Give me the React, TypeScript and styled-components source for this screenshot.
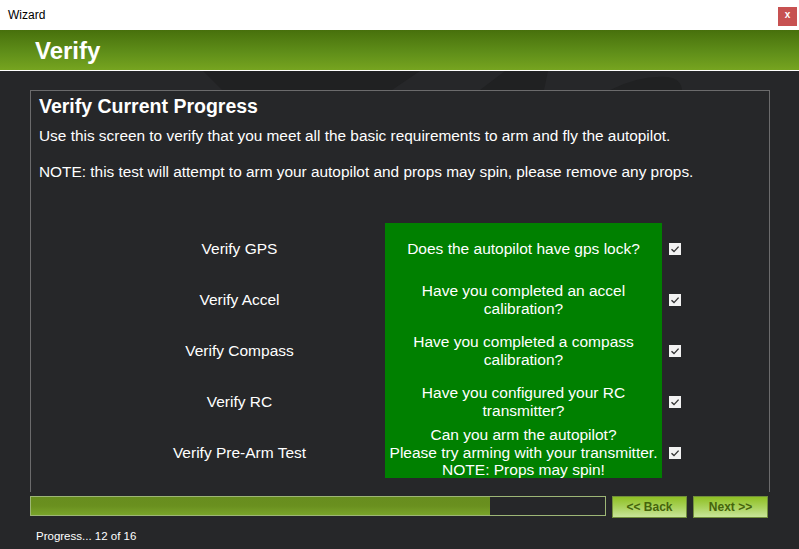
import { Fragment } from "react";
import styled, { createGlobalStyle } from "styled-components";

const GlobalStyle = createGlobalStyle`
  html, body {
    margin: 0;
    padding: 0;
    overflow: hidden;
  }
  body {
    font-family: "Liberation Sans", Arial, sans-serif;
  }
`;

const Window = styled.div`
  width: 799px;
  height: 549px;
  display: flex;
  flex-direction: column;
  background: #262729;
`;

const TitleBar = styled.div`
  height: 30px;
  flex: none;
  background: #ffffff;
  display: flex;
  align-items: center;
  justify-content: space-between;
  padding: 0 2px 0 8px;
  box-sizing: border-box;
  font-size: 12px;
  color: #000;
`;

const CloseButton = styled.div`
  width: 19px;
  height: 19px;
  margin-top: 2px;
  background: #c75151;
  color: #fff;
  font-size: 10px;
  font-weight: bold;
  display: flex;
  align-items: center;
  justify-content: center;
  line-height: 1;
  padding-bottom: 2px;
  box-sizing: border-box;
`;

const Header = styled.div`
  height: 41px;
  flex: none;
  box-sizing: border-box;
  background: linear-gradient(to bottom, #47700c 0%, #5f8e19 55%, #76a420 100%);
  border-bottom: 1px solid #ffffff;
  display: flex;
  align-items: center;
  padding-left: 35px;
  padding-top: 1px;
`;

const HeaderTitle = styled.h1`
  margin: 0;
  font-size: 24px;
  font-weight: bold;
  color: #ffffff;
`;

const Body = styled.div`
  flex: 1;
  position: relative;
  padding: 19px 30px 0 30px;
  box-sizing: border-box;
`;

const Watermark = styled.svg`
  position: absolute;
  left: 0;
  top: 0;
  width: 799px;
  height: 40px;
  fill: #202122;
`;

const Panel = styled.div`
  position: relative;
  width: 740px;
  height: 402px;
  box-sizing: border-box;
  border: 1px solid #6b6b6c;
  border-bottom: none;
  background: #262729;
  padding: 3px 8px 0 8px;
  color: #ffffff;
`;

const PanelTitle = styled.h2`
  margin: 0;
  font-size: 19.5px;
  line-height: 24px;
  font-weight: bold;
`;

const Para = styled.p<{ $gap: number }>`
  margin: ${(p) => p.$gap}px 0 0 0;
  font-size: 15.4px;
  line-height: 20px;
`;

const Checklist = styled.div`
  display: grid;
  grid-template-columns: 291px 277px 1fr;
  grid-auto-rows: 51px;
  margin: 41px 0 0 55px;
  height: 256px;
  overflow: hidden;
`;

const Label = styled.div`
  display: flex;
  align-items: center;
  justify-content: center;
  font-size: 15.5px;
`;

const Question = styled.div`
  background: #008000;
  display: flex;
  align-items: center;
  justify-content: center;
  text-align: center;
  font-size: 15.5px;
  line-height: 17.5px;
  white-space: pre-line;
`;

const CheckCell = styled.div`
  display: flex;
  align-items: center;
  padding-left: 7px;
`;

const Footer = styled.div`
  display: flex;
  align-items: flex-start;
  gap: 6px;
  margin-top: 4px;
`;

const Track = styled.div`
  width: 576px;
  height: 20px;
  box-sizing: border-box;
  border: 1px solid #9db676;
  background: #262729;
`;

const Fill = styled.div`
  height: 100%;
  background: linear-gradient(to bottom, #678d1e 0%, #6a901f 50%, #79a42a 100%);
`;

const WizardButton = styled.button`
  width: 75px;
  height: 22px;
  box-sizing: border-box;
  border: 1px solid #718f3b;
  background: linear-gradient(to bottom, #8fc024 0%, #a9d25a 50%, #c9e59a 100%);
  color: #45640c;
  font-family: "Liberation Sans", Arial, sans-serif;
  font-size: 12px;
  font-weight: bold;
  padding: 0;
  cursor: pointer;
`;

const Status = styled.div`
  margin: 11px 0 0 6px;
  font-size: 11.5px;
  line-height: 14px;
  color: #ffffff;
`;

function CheckBox() {
  return (
    <svg width="12" height="12" viewBox="0 0 12 12">
      <rect x="0" y="0" width="12" height="12" fill="#f2f2f2" />
      <path d="M2.5 6.2 L5 8.6 L9.6 3.6" fill="none" stroke="#333" strokeWidth="1.4" />
    </svg>
  );
}

const items = [
  { label: "Verify GPS", question: "Does the autopilot have gps lock?" },
  { label: "Verify Accel", question: "Have you completed an accel\ncalibration?" },
  { label: "Verify Compass", question: "Have you completed a compass\ncalibration?" },
  { label: "Verify RC", question: "Have you configured your RC\ntransmitter?" },
  {
    label: "Verify Pre-Arm Test",
    question: "Can you arm the autopilot?\nPlease try arming with your transmitter.\nNOTE: Props may spin!",
  },
];

const step = 12;
const total = 16;

export default function App() {
  return (
    <Window>
      <GlobalStyle />
      <TitleBar>
        <span>Wizard</span>
        <CloseButton>x</CloseButton>
      </TitleBar>
      <Header>
        <HeaderTitle>Verify</HeaderTitle>
      </Header>
      <Body>
        <Watermark viewBox="0 0 799 40">
          <polygon points="203,0 420,0 392,19 222,19" />
          <polygon points="480,19 505,0 548,0 544,19" />
          <path d="M610 19 Q640 4 668 6 Q681 8 682 19 Z" />
        </Watermark>
        <Panel>
          <PanelTitle>Verify Current Progress</PanelTitle>
          <Para $gap={8}>
            Use this screen to verify that you meet all the basic requirements to arm and fly the autopilot.
          </Para>
          <Para $gap={16}>
            NOTE: this test will attempt to arm your autopilot and props may spin, please remove any props.
          </Para>
          <Checklist>
            {items.map((item) => (
              <Fragment key={item.label}>
                <Label>{item.label}</Label>
                <Question>{item.question}</Question>
                <CheckCell>
                  <CheckBox />
                </CheckCell>
              </Fragment>
            ))}
          </Checklist>
        </Panel>
        <Footer>
          <Track>
            <Fill style={{ width: `${(step / (total - 1)) * 100}%` }} />
          </Track>
          <WizardButton>&lt;&lt; Back</WizardButton>
          <WizardButton>Next &gt;&gt;</WizardButton>
        </Footer>
        <Status>
          Progress... {step} of {total}
        </Status>
      </Body>
    </Window>
  );
}
